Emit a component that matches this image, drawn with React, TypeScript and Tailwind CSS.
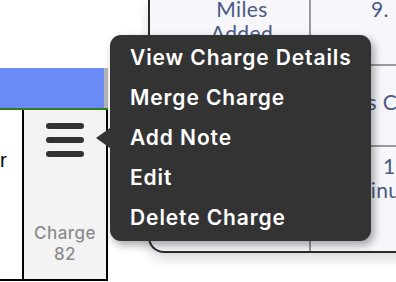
import { useState } from "react"

const menuItems = ["View Charge Details", "Merge Charge", "Add Note", "Edit", "Delete Charge"]

function Hamburger() {
  return (
    <div className="flex flex-col gap-[8px]">
      <span className="block h-[6px] w-[38px] rounded-full bg-[#333]" />
      <span className="block h-[6px] w-[38px] rounded-full bg-[#333]" />
      <span className="block h-[6px] w-[38px] rounded-full bg-[#333]" />
    </div>
  )
}

function ActionMenu({ onPick }: { onPick: (item: string) => void }) {
  return (
    <div className="absolute left-[110px] top-[35px] z-20">
      <div className="absolute left-[-14px] top-[93px] h-0 w-0 border-y-[10px] border-r-[14px] border-y-transparent border-r-[#333]" />
      <ul className="w-[261px] rounded-[11px] bg-[#333] py-[3px] shadow-[3px_4px_8px_rgba(0,0,0,0.35)]">
        {menuItems.map(item => (
          <li
            key={item}
            onClick={() => onPick(item)}
            className="flex h-[40px] cursor-pointer items-center whitespace-nowrap pl-[20px] font-['Inter',sans-serif] text-[21px] font-semibold tracking-[0.9px] text-white"
          >
            {item}
          </li>
        ))}
      </ul>
    </div>
  )
}

export default function App() {
  const [picked, setPicked] = useState<string | null>(null)

  return (
    <div className="relative flex h-[282px] w-[396px] overflow-hidden bg-white">
      {/* charges table */}
      <div className="w-[108px] shrink-0 pt-[68px]">
        <div className="flex h-[40px]">
          <div className="w-[104px] bg-[#6a8bf5]" />
          <div className="w-[4px] bg-[#b4b4b4]" />
        </div>
        <div className="h-[2px] w-[108px] bg-[#2f7d1f]" />
        <div className="flex h-[171px] border-b-2 border-black">
          <div className="w-[22px] overflow-hidden pt-[38px] font-['Liberation_Sans',sans-serif] text-[20px] leading-[24px] text-black">
            r
          </div>
          <div className="flex w-[86px] flex-col items-center justify-between border-x-2 border-black bg-[#f3f3f3] pb-[14px] pt-[13px]">
            <Hamburger />
            <div className="text-center font-['Inter',sans-serif] text-[17px] font-medium leading-[21px] tracking-[0.5px] text-[#8c8c8c]">
              Charge
              <br />
              {picked ? 82 : 82}
            </div>
          </div>
        </div>
      </div>

      {/* summary card */}
      <div className="ml-[40px] flex h-[253px] w-[280px] shrink-0 flex-col overflow-hidden rounded-bl-[16px] border-b-2 border-l-2 border-[#2a2a2a] bg-[#f6f6fb] font-['Lato',sans-serif] text-[21px] leading-[24px] tracking-[0.4px] text-[#4b5a82] shadow-[0_6px_12px_rgba(0,0,0,0.15)]">
        <div className="flex h-[66px] shrink-0 border-b-2 border-[#9a9a9a]">
          <div className="w-[161px] shrink-0 border-r-2 border-[#9a9a9a] pl-[34px] text-center">
            <div className="-mt-[3px] w-[116px]">
              Miles
              <br />
              Added
            </div>
          </div>
          <div className="-mt-[3px] whitespace-nowrap pl-[60px]">9.</div>
        </div>
        <div className="flex h-[81px] shrink-0 border-b-2 border-[#9a9a9a]">
          <div className="w-[161px] shrink-0 border-r-2 border-[#9a9a9a]" />
          <div className="whitespace-nowrap pl-[8px] pt-[24px]">Hours Charged</div>
        </div>
        <div className="flex flex-1">
          <div className="w-[161px] shrink-0 border-r-2 border-[#9a9a9a]" />
          <div className="whitespace-nowrap pt-[7px]">
            <div className="pl-[72px]">12</div>
            <div className="pl-[40px]">Minutes</div>
          </div>
        </div>
      </div>

      <ActionMenu onPick={setPicked} />
    </div>
  )
}
